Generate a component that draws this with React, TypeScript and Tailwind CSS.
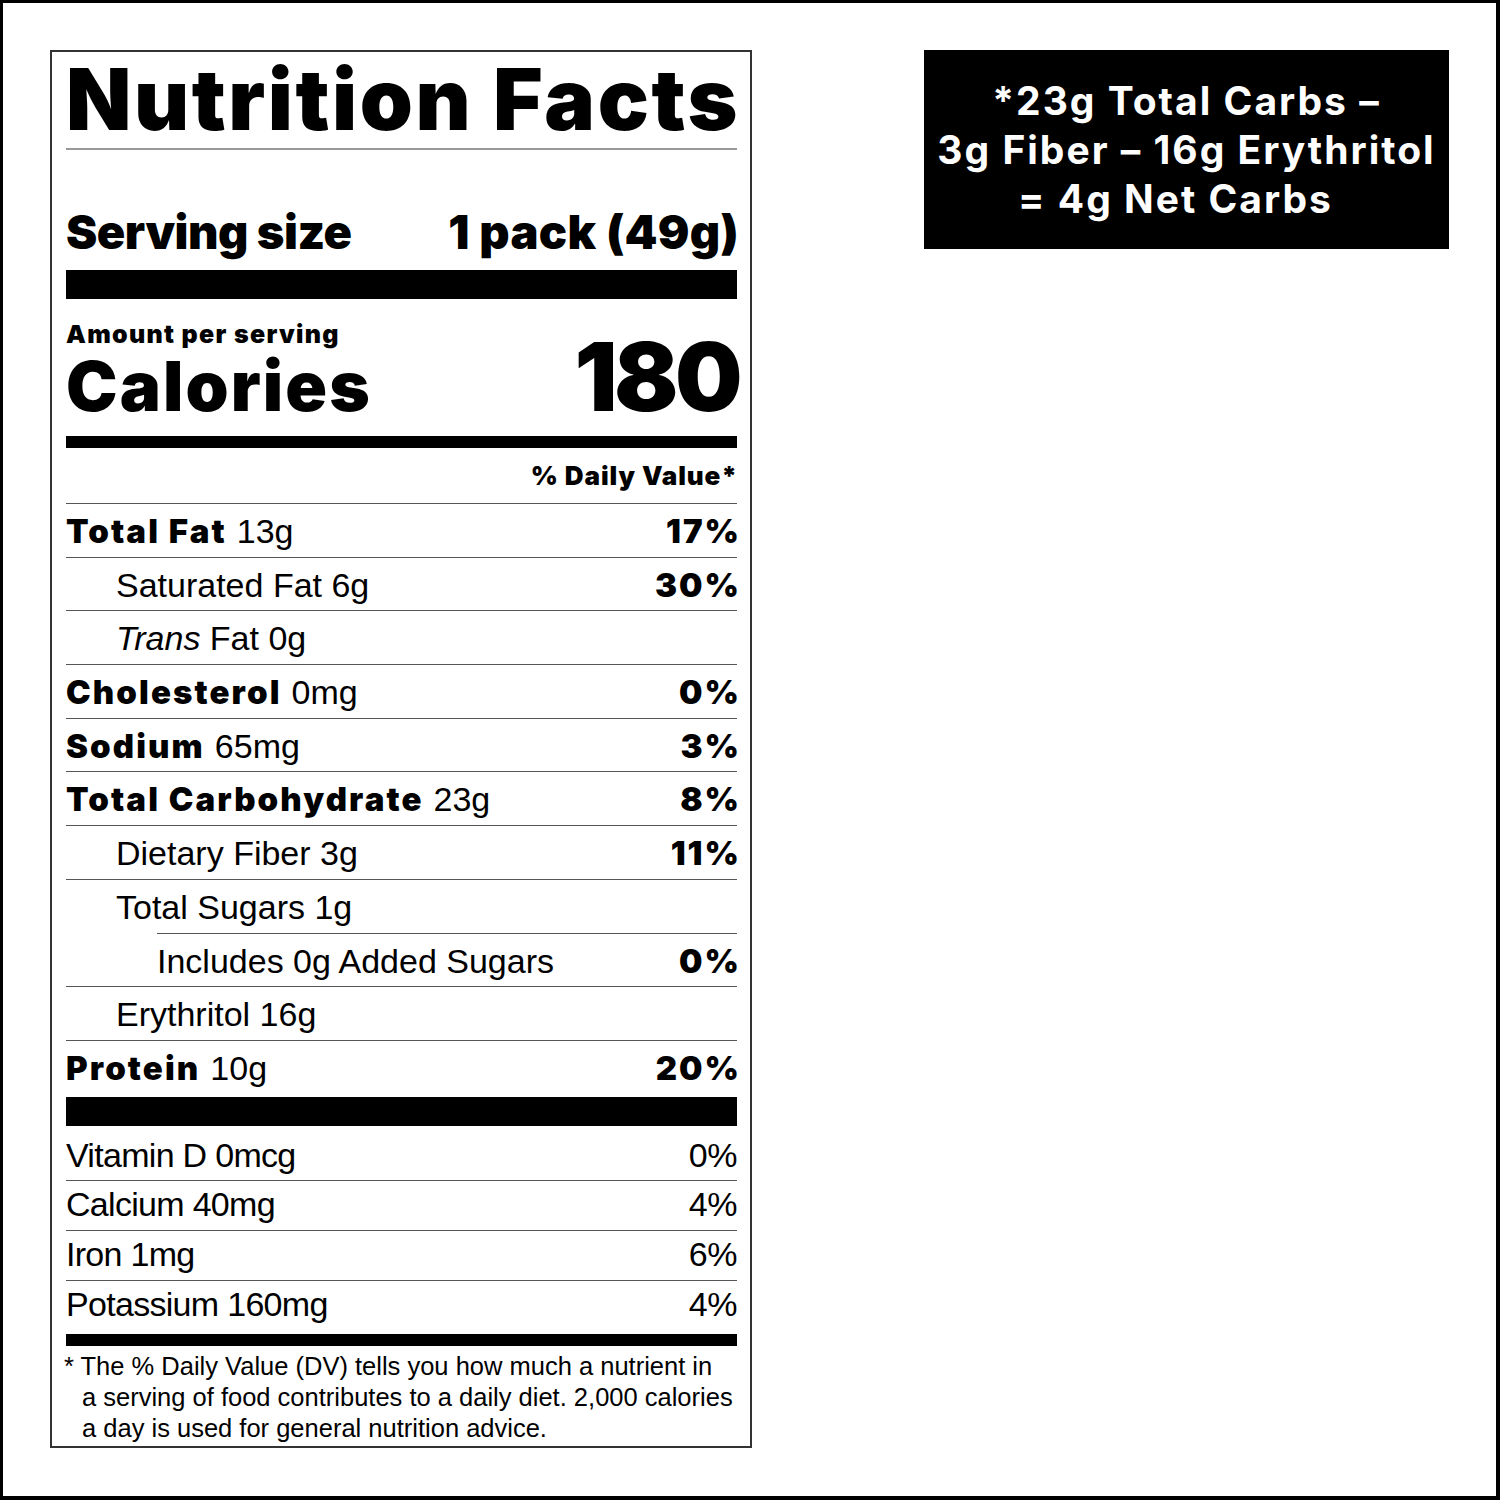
import React from "react";

const BOLD = "font-['Inter',sans-serif] font-black text-black";
const REG = "font-['Liberation_Sans',Arial,sans-serif] font-normal text-black";

type Row = {
  b?: string;
  i?: string;
  r?: string;
  p?: string;
  indent: number;
  lineIndent?: boolean;
  last?: boolean;
};

const rows: Row[] = [
  { b: "Total Fat", r: "13g", p: "17%", indent: 0 },
  { r: "Saturated Fat 6g", p: "30%", indent: 1 },
  { i: "Trans", r: " Fat 0g", indent: 1 },
  { b: "Cholesterol", r: "0mg", p: "0%", indent: 0 },
  { b: "Sodium", r: "65mg", p: "3%", indent: 0 },
  { b: "Total Carbohydrate", r: "23g", p: "8%", indent: 0 },
  { r: "Dietary Fiber 3g", p: "11%", indent: 1 },
  { r: "Total Sugars 1g", indent: 1, lineIndent: true },
  { r: "Includes 0g Added Sugars", p: "0%", indent: 2 },
  { r: "Erythritol 16g", indent: 1 },
  { b: "Protein", r: "10g", p: "20%", indent: 0, last: true },
];

const vitamins = [
  { t: "Vitamin D 0mcg", p: "0%", cls: "h-[54px] pt-[12px]" },
  { t: "Calcium 40mg", p: "4%", cls: "h-[49px] pt-[6px]" },
  { t: "Iron 1mg", p: "6%", cls: "h-[49px] pt-[6px]" },
  { t: "Potassium 160mg", p: "4%", cls: "h-[53px] pt-[6px]" },
];

function NutrientRow({ row }: { row: Row }) {
  const indentCls =
    row.indent === 2 ? "pl-[91px]" : row.indent === 1 ? "pl-[50px]" : "pl-0";
  return (
    <div className="flex flex-col">
      <div
        className={`flex justify-between items-baseline ${
          row.last ? "h-[56px]" : "h-[52.7px]"
        } pt-[10px] leading-none`}
      >
        <div className={`${indentCls} whitespace-nowrap`}>
          {row.b && (
            <span className={`${BOLD} text-[33px] tracking-[2.1px] mr-[10px]`}>{row.b}</span>
          )}
          {row.i && <span className={`${REG} italic text-[34px]`}>{row.i}</span>}
          {row.r && <span className={`${REG} text-[34px]`}>{row.r}</span>}
        </div>
        {row.p && (
          <span className={`${BOLD} text-[33px] tracking-[2px] -mr-[4px]`}>{row.p}</span>
        )}
      </div>
      {!row.last && (
        <div className={row.lineIndent ? "pl-[91px]" : ""}>
          <div className="h-px bg-[#555]" />
        </div>
      )}
    </div>
  );
}

export default function App() {
  return (
    <div className="w-[1500px] h-[1500px] bg-white border-t-[3px] border-l-[3px] border-r-4 border-b-4 border-black pl-[47px] pt-[47px] flex items-start">
      {/* Label */}
      <div className="w-[702px] h-[1398px] border-2 border-[#333] pl-[14px] pr-[13px] flex flex-col">
        {/* Title */}
        <div className={`${BOLD} text-[85px] leading-none pt-[5px] whitespace-nowrap tracking-[2.6px]`}>
          Nutrition Facts
        </div>
        <div className="mt-[6px] h-[2px] bg-[#999]" />
        {/* Serving */}
        <div className="h-[120px] pt-[58px] flex justify-between items-baseline leading-none">
          <span className={`${BOLD} text-[47px] tracking-[-0.5px]`}>Serving size</span>
          <span className={`${BOLD} text-[47px] tracking-[0.3px] -mr-[2px]`}>1 pack (49g)</span>
        </div>
        <div className="h-[29px] bg-black" />
        {/* Calories */}
        <div className="h-[137px] flex flex-col">
          <div className={`${BOLD} text-[25px] leading-[22px] pt-[24px] tracking-[1.3px]`}>
            Amount per serving
          </div>
          <div className="mt-[2px] flex justify-between items-baseline">
            <span className={`${BOLD} text-[69px] leading-[52px] tracking-[2.1px]`}>Calories</span>
            <span className={`${BOLD} text-[95px] leading-[60px] tracking-[-3.5px] -mr-[2px]`}>180</span>
          </div>
        </div>
        <div className="h-[12px] bg-black" />
        {/* DV header */}
        <div className="h-[55px] pt-[14.5px] flex justify-end leading-none">
          <span className={`${BOLD} text-[26px] tracking-[0.9px] -mr-[1px]`}>% Daily Value*</span>
        </div>
        <div className="h-px bg-[#555]" />
        {rows.map((row, idx) => (
          <NutrientRow key={idx} row={row} />
        ))}
        <div className="h-[29px] bg-black" />
        {vitamins.map((v, idx) => (
          <div key={idx} className="flex flex-col">
            <div className={`${v.cls} flex justify-between items-baseline leading-none`}>
              <span className={`${REG} text-[34px] tracking-[-0.7px]`}>{v.t}</span>
              <span className={`${REG} text-[34px] tracking-[-0.5px]`}>{v.p}</span>
            </div>
            {idx < vitamins.length - 1 && <div className="h-px bg-[#555]" />}
          </div>
        ))}
        <div className="h-[12px] bg-black" />
        <div className={`${REG} text-[25.5px] leading-[31px] pt-[5px] pl-[16px] indent-[-18px] whitespace-nowrap`}>
          * The % Daily Value (DV) tells you how much a nutrient in
          <br />
          a serving of food contributes to a daily diet. 2,000 calories
          <br />
          a day is used for general nutrition advice.
        </div>
      </div>
      {/* Net carbs box */}
      <div className="ml-[172px] w-[525px] h-[199px] bg-black pt-[26px] flex flex-col items-center">
        <div className="font-['Inter',sans-serif] font-bold text-white text-[39px] leading-[49px] text-center whitespace-nowrap tracking-[2px]">
          <div>*23g Total Carbs –</div>
          <div>3g Fiber – 16g Erythritol</div>
          <div className="pr-[22px]">= 4g Net Carbs</div>
        </div>
      </div>
    </div>
  );
}
